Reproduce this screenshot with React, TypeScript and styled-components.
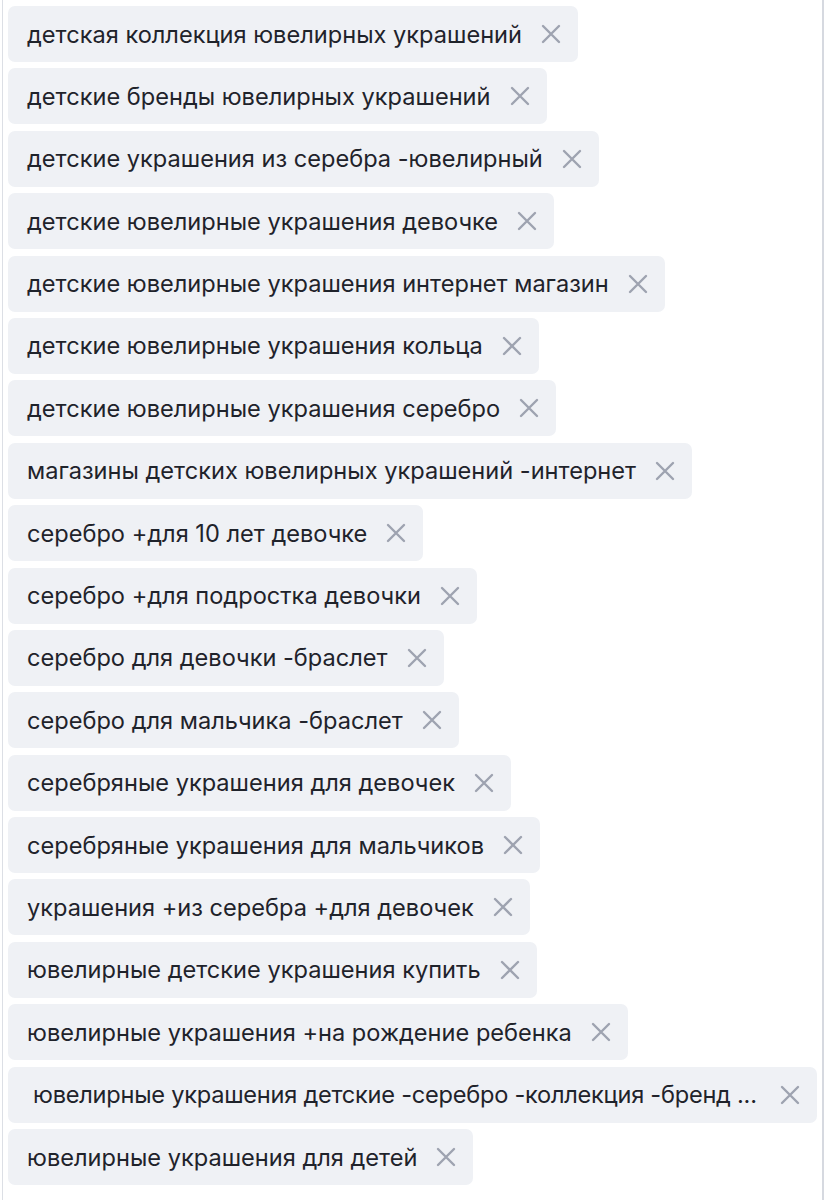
import React from "react";
import styled, { createGlobalStyle } from "styled-components";

const Global = createGlobalStyle`
  html, body { margin: 0; padding: 0; background: #fff; }
  body { font-family: Inter, "Noto Sans", sans-serif; }
`;

const Panel = styled.div`
  margin-left: 2px;
  width: 822px;
  min-height: 1200px;
  box-sizing: border-box;
  border-left: 1px solid #dcdfe5;
  border-right: 2px solid #d6d9e0;
  padding: 6px 5px 0 5px;
  display: flex;
  flex-direction: column;
  align-items: flex-start;
  gap: 6.4px;
`;

const Chip = styled.div<{ $long?: boolean }>`
  display: flex;
  align-items: center;
  height: 56px;
  max-width: 810px;
  box-sizing: border-box;
  padding: 0 16px 0 ${(p) => (p.$long ? "25px" : "19px")};
  background: #eff1f5;
  border-radius: 7px;
  gap: ${(p) => (p.$long ? "22px" : "18px")};
`;

const Label = styled.span<{ $long?: boolean }>`
  font-size: 23.6px;
  color: #1f232b;
  white-space: nowrap;
  letter-spacing: ${(p) => (p.$long ? "-0.25px" : "0")};
`;

const Remove = styled.svg`
  flex: none;
  width: 22px;
  height: 22px;
`;

const items = [
  "детская коллекция ювелирных украшений",
  "детские бренды ювелирных украшений",
  "детские украшения из серебра -ювелирный",
  "детские ювелирные украшения девочке",
  "детские ювелирные украшения интернет магазин",
  "детские ювелирные украшения кольца",
  "детские ювелирные украшения серебро",
  "магазины детских ювелирных украшений -интернет",
  "серебро +для 10 лет девочке",
  "серебро +для подростка девочки",
  "серебро для девочки -браслет",
  "серебро для мальчика -браслет",
  "серебряные украшения для девочек",
  "серебряные украшения для мальчиков",
  "украшения +из серебра +для девочек",
  "ювелирные детские украшения купить",
  "ювелирные украшения +на рождение ребенка",
  "ювелирные украшения детские -серебро -коллекция -бренд ...",
  "ювелирные украшения для детей",
];

export default function App() {
  return (
    <>
      <Global />
      <Panel>
        {items.map((t, i) => (
          <Chip key={i} $long={i === 17}>
            <Label $long={i === 17}>{t}</Label>
            <Remove viewBox="0 0 22 22">
              <path d="M3 3 L19 19 M19 3 L3 19" stroke="#9ea3b0" strokeWidth="2.4" strokeLinecap="round" />
            </Remove>
          </Chip>
        ))}
      </Panel>
    </>
  );
}
